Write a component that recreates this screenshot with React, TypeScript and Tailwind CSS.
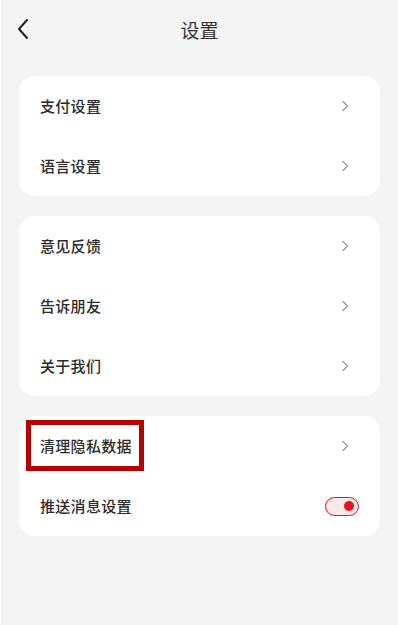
import { FC } from "react";

const ChevronRight: FC = () => (
  <svg width="10" height="14" viewBox="0 0 10 14" fill="none" className="shrink-0">
    <path d="M3 2.5L7.5 7L3 11.5" stroke="#9a9a9a" strokeWidth="1.4" strokeLinecap="round" strokeLinejoin="round" />
  </svg>
);

const Row: FC<{ label: string; highlight?: boolean; right?: React.ReactNode }> = ({ label, highlight, right }) => (
  <div className="flex h-[60px] items-center justify-between pl-[21px] pr-[30px]">
    <span className="relative text-[15px] font-medium tracking-[0.3px] text-[#2b2b2b]">
      {label}
      {highlight && (
        <span className="pointer-events-none absolute left-[-14px] right-[-12px] top-[-15px] bottom-[-14px] border-[5px] border-[#b80000]" />
      )}
    </span>
    {right ?? <ChevronRight />}
  </div>
);

const Toggle: FC = () => (
  <div className="mr-[-9px] flex h-[19px] w-[34px] items-center justify-end rounded-full border-[1.5px] border-[#e8111c] bg-[#fde9ea] pr-[4px]">
    <div className="h-[10px] w-[10px] rounded-full bg-[#e8111c]" />
  </div>
);

export default function App() {
  return (
    <div
      className="flex h-[625px] w-[398px] flex-col border-l border-white bg-[#f4f4f4]"
      style={{ fontFamily: '"Noto Sans CJK SC", "Noto Sans", sans-serif' }}
    >
      <header className="relative flex h-[60px] items-center justify-center">
        <svg width="14" height="22" viewBox="0 0 14 22" fill="none" className="absolute left-[15px] top-[18px]">
          <path d="M11 2L3 11L11 20" stroke="#222" strokeWidth="2" strokeLinecap="round" strokeLinejoin="round" />
        </svg>
        <h1 className="text-[19px] font-normal text-[#333]">设置</h1>
      </header>

      <div className="mt-[16px] flex flex-col gap-[20px] pl-[18px] pr-[18px]">
        <div className="rounded-[16px] bg-white">
          <Row label="支付设置" />
          <Row label="语言设置" />
        </div>
        <div className="rounded-[16px] bg-white">
          <Row label="意见反馈" />
          <Row label="告诉朋友" />
          <Row label="关于我们" />
        </div>
        <div className="rounded-[16px] bg-white">
          <Row label="清理隐私数据" highlight />
          <Row label="推送消息设置" right={<Toggle />} />
        </div>
      </div>
    </div>
  );
}
